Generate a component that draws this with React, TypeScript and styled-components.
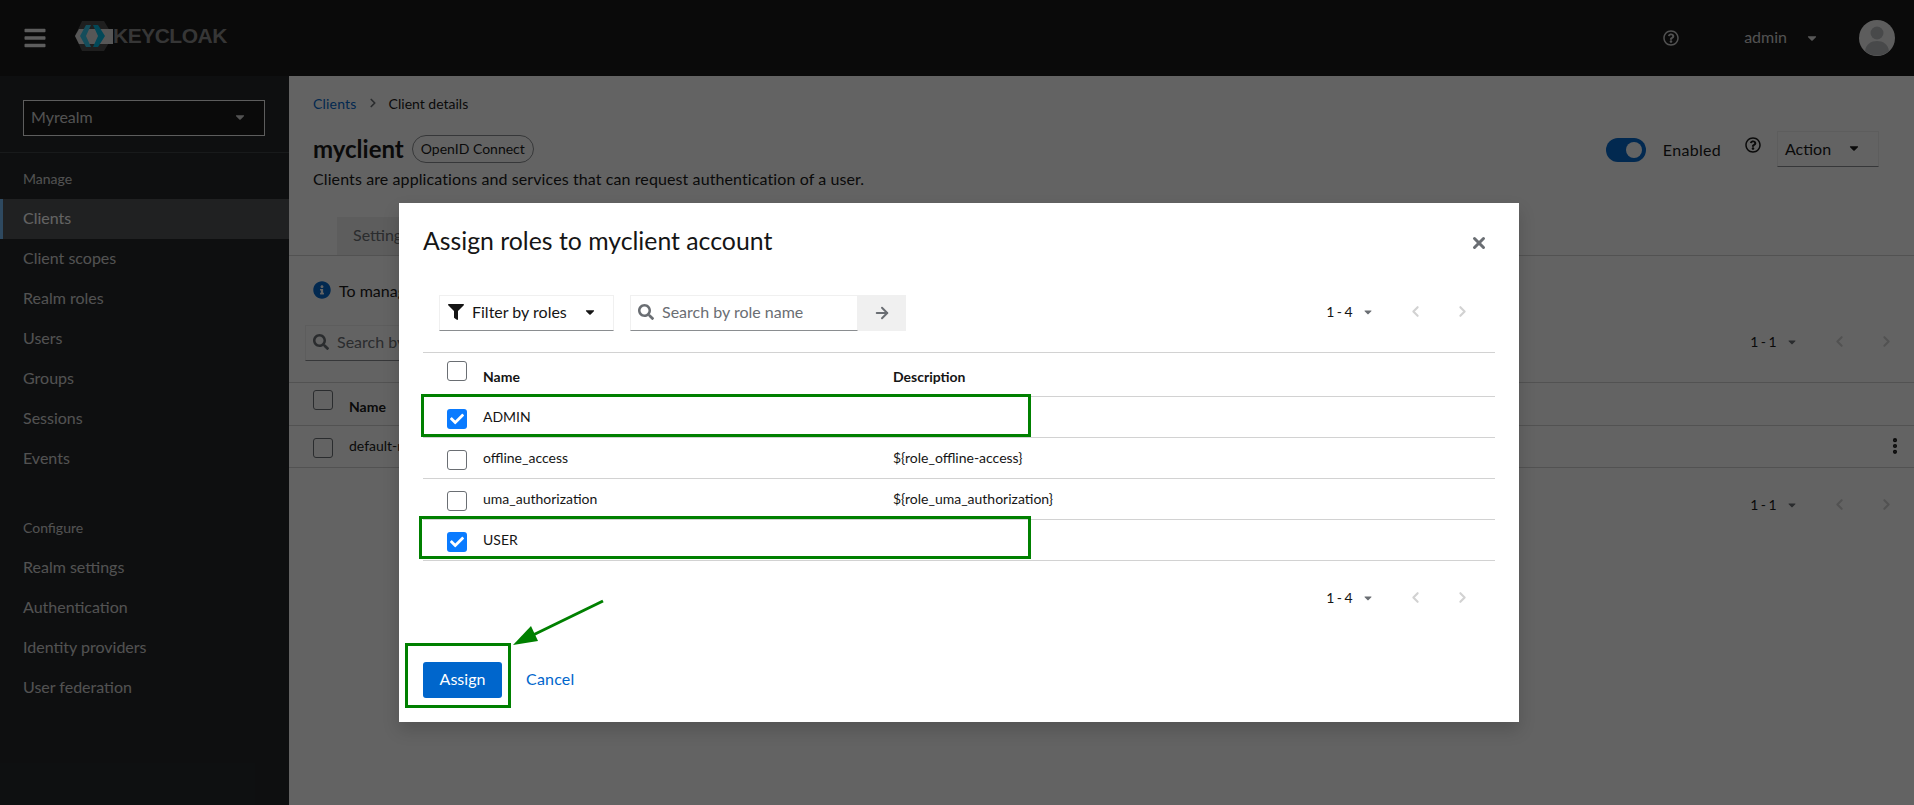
import React from 'react';
import styled, { createGlobalStyle } from 'styled-components';
import { X, ArrowRight, ChevronLeft, ChevronRight, EllipsisVertical } from 'lucide-react';
import { FaFilter, FaSearch, FaCaretDown, FaInfoCircle, FaBars, FaCheck, FaRegQuestionCircle } from 'react-icons/fa';

const FONT = '"Lato", "Noto Sans", sans-serif';

const GlobalStyle = createGlobalStyle`
    * { box-sizing: border-box; }
    html, body { margin: 0; height: 805px; overflow: hidden; background: #fff; }
    body { font-family: ${FONT}; color: #151515; font-size: 16px; }
`;

const Page = styled.div`
    width: 1914px;
    height: 805px;
    position: relative;
    display: flex;
    flex-direction: column;
    overflow: hidden;
`;

const Masthead = styled.header`
    height: 76px;
    background: #151515;
    display: flex;
    align-items: center;
    padding: 0 19px 0 24px;
    color: #ededed;
    flex: none;
`;

const MenuButton = styled(FaBars)`
    width: 22px;
    height: 24px;
    color: #f0f0f0;
    margin-right: 29px;
`;

const Logo = styled.div`
    display: flex;
    align-items: center;
    height: 32px;
    margin-bottom: 5px;
`;

const LogoWord = styled.span`
    font-family: "Liberation Sans", sans-serif;
    font-weight: 700;
    font-size: 21px;
    letter-spacing: -0.5px;
    color: #888;
`;

const MastheadRight = styled.div`
    margin-left: auto;
    display: flex;
    align-items: center;
`;

const MastheadHelp = styled(FaRegQuestionCircle)`
    width: 16px;
    height: 16px;
    color: #d2d2d2;
    margin-right: 65px;
`;

const UserName = styled.span`
    font-size: 16px;
    line-height: 18px;
    padding-bottom: 2px;
    color: #d2d2d2;
`;

const UserCaret = styled(FaCaretDown)`
    width: 14px;
    height: 14px;
    color: #e0e0e0;
    margin: 0 40px 0 18px;
`;

const Avatar = styled.svg`
    width: 36px;
    height: 36px;
    display: block;
`;

const Body = styled.div`
    flex: 1;
    display: flex;
    min-height: 0;
`;

const Sidebar = styled.nav`
    width: 289px;
    background: #212427;
    flex: none;
    color: #d2d2d2;
`;

const RealmBox = styled.div`
    height: 77px;
    padding: 24px 24px 0 23px;
    border-bottom: 1px solid #3c3f42;
`;

const RealmSelect = styled.div`
    height: 36px;
    width: 242px;
    background: #151515;
    border: 1px solid #f0f0f0;
    display: flex;
    align-items: center;
    justify-content: space-between;
    padding: 0 17px 3px 7px;
    font-size: 16px;
`;

const NavTitle = styled.div<{ $top: number }>`
    font-size: 14px;
    padding: 0 23px;
    margin-top: ${({ $top }) => $top}px;
    height: 40px;
    line-height: 40px;
`;

const NavItem = styled.div<{ $active?: boolean }>`
    height: 40px;
    line-height: 37px;
    padding-left: 23px;
    font-size: 16px;
    background: ${({ $active }) => ($active ? '#4f5255' : 'transparent')};
    color: ${({ $active }) => ($active ? '#fff' : '#d2d2d2')};
    box-shadow: ${({ $active }) => ($active ? 'inset 3px 0 0 #73bcf7' : 'none')};
`;

const Main = styled.main`
    flex: 1;
    background: #fff;
    min-width: 0;
`;

const Breadcrumb = styled.div`
    height: 55px;
    padding: 19px 24px 0;
    display: flex;
    align-items: flex-start;
    font-size: 14px;
    line-height: 17px;
`;

const Crumb = styled.span`
    color: #06c;
    letter-spacing: 0.2px;
`;

const CrumbSep = styled(ChevronRight)`
    width: 14px;
    height: 14px;
    margin: 1px 9px 0;
    color: #6a6e73;
    stroke-width: 3;
`;

const PageHead = styled.div`
    height: 86px;
    padding: 0 35px 0 24px;
    display: flex;
    justify-content: space-between;
`;

const TitleRow = styled.div`
    display: flex;
    align-items: center;
    gap: 8px;
    height: 36px;
`;

const ClientTitle = styled.h1`
    margin: 0 0 2px;
    font-size: 24px;
    font-weight: 700;
`;

const Badge = styled.span`
    height: 28px;
    border: 1px solid #8a8d90;
    border-radius: 14px;
    padding: 0 8px;
    font-size: 14px;
    line-height: 26px;
`;

const Subtitle = styled.p`
    margin: 1px 0 0;
    line-height: 22px;
    font-size: 16px;
    letter-spacing: 0.1px;
`;

const HeadActions = styled.div`
    display: flex;
    align-items: flex-start;
`;

const Toggle = styled.span`
    width: 40px;
    height: 24px;
    border-radius: 12px;
    background: #06c;
    margin-top: 7px;
    display: flex;
    justify-content: flex-end;
    align-items: center;
    padding-right: 4px;
`;

const ToggleKnob = styled.span`
    width: 16px;
    height: 16px;
    border-radius: 50%;
    background: #fff;
`;

const ToggleLabel = styled.span`
    margin: 7px 24px 0 17px;
    line-height: 24px;
    letter-spacing: 0.3px;
`;

const ActionHelp = styled(FaRegQuestionCircle)`
    width: 16px;
    height: 16px;
    margin: 6px 16px 0 0;
`;

const ActionSelect = styled.div`
    width: 102px;
    height: 36px;
    border: 1px solid #f0f0f0;
    border-bottom-color: #8a8d90;
    display: flex;
    align-items: center;
    justify-content: space-between;
    padding: 0 17px 2px 7px;
`;

const Tabs = styled.div`
    height: 39px;
    border-bottom: 1px solid #d2d2d2;
    padding-left: 48px;
    display: flex;
`;

const Tab = styled.div`
    width: 120px;
    background: #f0f0f0;
    color: #6a6e73;
    padding: 6px 16px;
    line-height: 24px;
`;

const InfoRow = styled.div`
    height: 52px;
    display: flex;
    align-items: center;
    padding: 16px 24px 0;
    gap: 8px;
`;

const InfoIcon = styled(FaInfoCircle)`
    width: 18px;
    height: 18px;
    color: #06c;
`;

const Toolbar = styled.div<{ $height: number; $top: number; $rule?: boolean }>`
    height: ${({ $height }) => $height}px;
    display: flex;
    align-items: flex-start;
    padding: ${({ $top }) => $top}px 4px 0 16px;
    justify-content: space-between;
    border-top: ${({ $rule }) => ($rule ? '1px solid #d2d2d2' : 'none')};
`;

const SearchInput = styled.div<{ $width: number }>`
    width: ${({ $width }) => $width}px;
    height: 36px;
    border: 1px solid #f0f0f0;
    border-bottom-color: #8a8d90;
    display: flex;
    align-items: center;
    gap: 8px;
    padding: 0 0 3px 7px;
    color: #6a6e73;
    font-size: 16px;
`;

const SearchGlyph = styled(FaSearch)`
    width: 16px;
    height: 16px;
    color: #6a6e73;
    flex: none;
`;

const Pager = styled.div`
    display: flex;
    align-items: center;
    height: 33px;
    font-size: 14px;
    margin-left: auto;
`;

const PagerRange = styled.span`
    color: #151515;
    letter-spacing: 2.4px;
`;

const PagerCaret = styled(FaCaretDown)`
    width: 12px;
    height: 12px;
    color: #6a6e73;
    margin: 0 18px 0 7px;
`;

const PagerArrow = styled.span`
    width: 47px;
    display: flex;
    justify-content: center;
    color: #d2d2d2;
    & svg { width: 17px; height: 17px; stroke-width: 3; }
`;

const TableRow = styled.div<{ $height: number }>`
    height: ${({ $height }) => $height}px;
    border-top: 1px solid #d2d2d2;
    display: flex;
    align-items: center;
    padding-left: 24px;
    font-size: 14px;
    position: relative;
`;

const Cell = styled.span<{ $width?: number; $head?: boolean; $shift?: number }>`
    width: ${({ $width }) => ($width ? `${$width}px` : 'auto')};
    font-weight: ${({ $head }) => ($head ? 700 : 400)};
    font-size: 14px;
    margin-top: ${({ $shift }) => $shift ?? 0}px;
`;

const CheckBox = styled.span<{ $checked?: boolean; $shift?: number }>`
    width: 20px;
    height: 20px;
    flex: none;
    margin-right: 16px;
    margin-top: ${({ $shift }) => $shift ?? 0}px;
    border-radius: 3px;
    border: ${({ $checked }) => ($checked ? 'none' : '1px solid #6a6e73')};
    background: ${({ $checked }) => ($checked ? '#0a7bff' : '#fff')};
    color: #fff;
    display: flex;
    align-items: center;
    justify-content: center;
    & svg { width: 14px; height: 14px; }
`;

const Kebab = styled(EllipsisVertical)`
    position: absolute;
    right: 9px;
    top: 10px;
    width: 20px;
    height: 20px;
    color: #151515;
    stroke-width: 3;
`;

const Backdrop = styled.div`
    position: absolute;
    inset: 0;
    background: rgba(3, 3, 3, 0.62);
`;

const Modal = styled.section`
    position: absolute;
    left: 399px;
    top: 203px;
    width: 1120px;
    height: 519px;
    background: #fff;
    box-shadow: 0 8px 16px rgba(3, 3, 3, 0.16);
    padding: 24px;
    display: flex;
    flex-direction: column;
`;

const ModalHead = styled.div`
    height: 68px;
    display: flex;
    justify-content: space-between;
    align-items: flex-start;
`;

const ModalTitle = styled.h2`
    margin: 0;
    font-size: 24.8px;
    font-weight: 400;
    line-height: 28px;
`;

const CloseIcon = styled(X)`
    width: 18px;
    height: 18px;
    color: #6a6e73;
    stroke-width: 4;
    margin: 7px 7px 0 0;
`;

const ModalBody = styled.div`
    width: 1072px;
`;

const ModalToolbar = styled.div`
    height: 57px;
    display: flex;
    align-items: flex-start;
    padding: 0 9px 0 16px;
`;

const FilterButton = styled.div`
    width: 175px;
    height: 36px;
    border: 1px solid #f0f0f0;
    border-bottom-color: #8a8d90;
    display: flex;
    align-items: center;
    padding: 0 0 3px 8px;
    margin-right: 16px;
    font-size: 16px;
    & > svg:first-child { width: 16px; height: 16px; margin-right: 8px; }
    & > svg:last-child { width: 14px; height: 14px; margin-left: auto; margin-right: 16px; }
`;

const SearchGroup = styled.div`
    display: flex;
`;

const GoButton = styled.div`
    width: 48px;
    height: 36px;
    background: #f0f0f0;
    color: #6a6e73;
    display: flex;
    align-items: center;
    justify-content: center;
    & svg { width: 18px; height: 18px; stroke-width: 2.6; }
`;

const ModalFoot = styled.div`
    margin-top: auto;
    display: flex;
    align-items: center;
    gap: 24px;
`;

const PrimaryButton = styled.button`
    width: 79px;
    height: 36px;
    background: #06c;
    color: #fff;
    border: none;
    border-radius: 3px;
    font: 400 16px ${FONT};
    padding: 0 0 3px;
`;

const LinkButton = styled.span`
    color: #06c;
    padding-bottom: 4px;
    letter-spacing: 0.2px;
`;

const BottomPager = styled.div`
    display: flex;
    height: 36px;
    margin-top: 20px;
    padding-right: 9px;
`;

const Annotation = styled.div<{ $x: number; $y: number; $w: number; $h: number }>`
    position: absolute;
    left: ${({ $x }) => $x}px;
    top: ${({ $y }) => $y}px;
    width: ${({ $w }) => $w}px;
    height: ${({ $h }) => $h}px;
    border: 3px solid #008000;
`;

const AnnotationArrow = styled.svg`
    position: absolute;
    left: 505px;
    top: 595px;
    width: 105px;
    height: 55px;
`;

const KeycloakMark = () => (
    <svg width="38" height="32" viewBox="0 0 38 32" fill="none">
        <path d="M7 1h22l9 15-9 15H7L0 16z" fill="#4d4d4d" />
        <path d="M0 16 L4 9 H38 V24 H4 Z" fill="#e0e0e0" />
        <path d="M11 5 L5 16 L11 27 H16 L11 16 L16 5Z" fill="#33c6e9" />
        <path d="M18 5 L23 16 L18 27 H23 L30 16 L23 5Z" fill="#00b8e3" />
    </svg>
);

const PageRange = ({ range }: { range: string }) => (
    <Pager>
        <PagerRange>{range}</PagerRange>
        <PagerCaret />
        <PagerArrow><ChevronLeft /></PagerArrow>
        <PagerArrow><ChevronRight /></PagerArrow>
    </Pager>
);

const manage = ['Client scopes', 'Realm roles', 'Users', 'Groups', 'Sessions', 'Events'];
const configure = ['Realm settings', 'Authentication', 'Identity providers', 'User federation'];

const roles = [
    { name: 'ADMIN', description: '', checked: true },
    { name: 'offline_access', description: '${role_offline-access}', checked: false },
    { name: 'uma_authorization', description: '${role_uma_authorization}', checked: false },
    { name: 'USER', description: '', checked: true },
];

export default function App() {
    return (
        <Page>
            <GlobalStyle />
            <Masthead>
                <MenuButton />
                <Logo>
                    <KeycloakMark />
                    <LogoWord>KEYCLOAK</LogoWord>
                </Logo>
                <MastheadRight>
                    <MastheadHelp />
                    <UserName>admin</UserName>
                    <UserCaret />
                    <Avatar viewBox="0 0 36 36">
                        <circle cx="18" cy="18" r="18" fill="#f0f0f0" />
                        <circle cx="18" cy="13" r="6.5" fill="#b8bbbe" />
                        <path d="M6 31c1-7 6-10 12-10s11 3 12 10a18 18 0 0 1-24 0z" fill="#b8bbbe" />
                    </Avatar>
                </MastheadRight>
            </Masthead>
            <Body>
                <Sidebar>
                    <RealmBox>
                        <RealmSelect>
                            Myrealm
                            <FaCaretDown size={14} />
                        </RealmSelect>
                    </RealmBox>
                    <NavTitle $top={6}>Manage</NavTitle>
                    <NavItem $active>Clients</NavItem>
                    {manage.map((item) => (
                        <NavItem key={item}>{item}</NavItem>
                    ))}
                    <NavTitle $top={29}>Configure</NavTitle>
                    {configure.map((item) => (
                        <NavItem key={item}>{item}</NavItem>
                    ))}
                </Sidebar>
                <Main>
                    <Breadcrumb>
                        <Crumb>Clients</Crumb>
                        <CrumbSep />
                        Client details
                    </Breadcrumb>
                    <PageHead>
                        <div>
                            <TitleRow>
                                <ClientTitle>myclient</ClientTitle>
                                <Badge>OpenID Connect</Badge>
                            </TitleRow>
                            <Subtitle>Clients are applications and services that can request authentication of a user.</Subtitle>
                        </div>
                        <HeadActions>
                            <Toggle><ToggleKnob /></Toggle>
                            <ToggleLabel>Enabled</ToggleLabel>
                            <ActionHelp />
                            <ActionSelect>
                                Action
                                <FaCaretDown size={14} />
                            </ActionSelect>
                        </HeadActions>
                    </PageHead>
                    <Tabs>
                        <Tab>Settings</Tab>
                    </Tabs>
                    <InfoRow>
                        <InfoIcon />
                        To manage detail and flow, click on the scope
                    </InfoRow>
                    <Toolbar $height={74} $top={17}>
                        <SearchInput $width={300}>
                            <SearchGlyph />
                            Search by name
                        </SearchInput>
                        <PageRange range="1-1" />
                    </Toolbar>
                    <TableRow $height={43}>
                        <CheckBox $shift={-8} />
                        <Cell $head $shift={4}>Name</Cell>
                    </TableRow>
                    <TableRow $height={42}>
                        <CheckBox $shift={2} />
                        <Cell $shift={-2}>default-roles-myrealm</Cell>
                        <Kebab />
                    </TableRow>
                    <Toolbar $height={76} $top={20} $rule>
                        <PageRange range="1-1" />
                    </Toolbar>
                </Main>
            </Body>
            <Backdrop />
            <Modal>
                <ModalHead>
                    <ModalTitle>Assign roles to myclient account</ModalTitle>
                    <CloseIcon />
                </ModalHead>
                <ModalBody>
                    <ModalToolbar>
                        <FilterButton>
                            <FaFilter />
                            Filter by roles
                            <FaCaretDown />
                        </FilterButton>
                        <SearchGroup>
                            <SearchInput $width={228}>
                                <SearchGlyph />
                                Search by role name
                            </SearchInput>
                            <GoButton><ArrowRight /></GoButton>
                        </SearchGroup>
                        <PageRange range="1-4" />
                    </ModalToolbar>
                    <TableRow $height={44}>
                        <CheckBox $shift={-7} />
                        <Cell $head $width={410} $shift={3}>Name</Cell>
                        <Cell $head $shift={3}>Description</Cell>
                    </TableRow>
                    {roles.map((role) => (
                        <TableRow key={role.name} $height={41}>
                            <CheckBox $checked={role.checked} $shift={3}>{role.checked && <FaCheck />}</CheckBox>
                            <Cell $width={410} $shift={-2}>{role.name}</Cell>
                            <Cell $shift={-2}>{role.description}</Cell>
                        </TableRow>
                    ))}
                    <TableRow $height={1} />
                    <BottomPager>
                        <PageRange range="1-4" />
                    </BottomPager>
                </ModalBody>
                <ModalFoot>
                    <PrimaryButton>Assign</PrimaryButton>
                    <LinkButton>Cancel</LinkButton>
                </ModalFoot>
            </Modal>
            <Annotation $x={421} $y={394} $w={610} $h={43} />
            <Annotation $x={419} $y={516} $w={612} $h={43} />
            <Annotation $x={405} $y={643} $w={106} $h={65} />
            <AnnotationArrow viewBox="0 0 105 55">
                <path d="M98 6 L26 41" stroke="#008000" strokeWidth="3" />
                <path d="M8 50 L26 31 L33 46 Z" fill="#008000" />
            </AnnotationArrow>
        </Page>
    );
}
